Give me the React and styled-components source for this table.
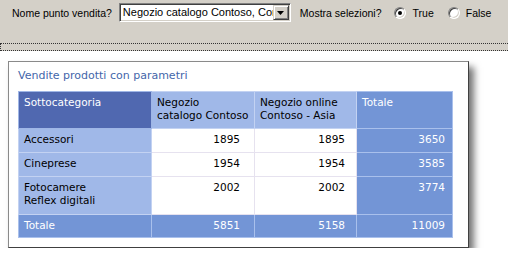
import React from 'react'
import styled, { createGlobalStyle } from 'styled-components'

const Global = createGlobalStyle`
    body {
        margin: 0;
        background: #fff;
    }
`;

const rows = [
    { name: ['Accessori'], a: 1895, b: 1895, tot: 3650, h: 24 },
    { name: ['Cineprese'], a: 1954, b: 1954, tot: 3585, h: 24 },
    { name: ['Fotocamere', 'Reflex digitali'], a: 2002, b: 2002, tot: 3774, h: 38 },
];

export default function App () {
    return (
        <>
            <Global />
            <Toolbar>
                <Label>Nome punto vendita?</Label>
                <Select>
                    <SelectText>Negozio catalogo Contoso, Cor</SelectText>
                    <SelectButton>
                        <svg width="7" height="4" viewBox="0 0 7 4">
                            <path d="M0 0h7L3.5 4z" fill="#000" />
                        </svg>
                    </SelectButton>
                </Select>
                <Label $ml={9}>Mostra selezioni?</Label>
                <Radio $ml={12} $checked />
                <Label $ml={7}>True</Label>
                <Radio $ml={14} />
                <Label $ml={6}>False</Label>
            </Toolbar>
            <Splitter />

            <Page>
                <ReportBox>
                    <Title>Vendite prodotti con parametri</Title>
                    <Table>
                        <colgroup>
                            <col style={{ width: 133 }} />
                            <col style={{ width: 103 }} />
                            <col style={{ width: 102 }} />
                            <col style={{ width: 96 }} />
                        </colgroup>
                        <tbody>
                            <tr style={{ height: 37 }}>
                                <Cell $kind="corner">Sottocategoria</Cell>
                                <Cell $kind="head">Negozio<br />catalogo Contoso</Cell>
                                <Cell $kind="head">Negozio online<br />Contoso - Asia</Cell>
                                <Cell $kind="total">Totale</Cell>
                            </tr>
                            {rows.map((r) => (
                                <tr key={r.name[0]} style={{ height: r.h }}>
                                    <Cell $kind="label">
                                        {r.name.map((n, i) => (
                                            <React.Fragment key={n}>{i > 0 && <br />}{n}</React.Fragment>
                                        ))}
                                    </Cell>
                                    <Cell $kind="data" $num $pr={14}>{r.a}</Cell>
                                    <Cell $kind="data" $num $pr={11}>{r.b}</Cell>
                                    <Cell $kind="total" $num $pr={7}>{r.tot}</Cell>
                                </tr>
                            ))}
                            <tr style={{ height: 23 }}>
                                <Cell $kind="total">Totale</Cell>
                                <Cell $kind="total" $num $pr={14}>5851</Cell>
                                <Cell $kind="total" $num $pr={11}>5158</Cell>
                                <Cell $kind="total" $num $pr={7}>11009</Cell>
                            </tr>
                        </tbody>
                    </Table>
                </ReportBox>
            </Page>
        </>
    );
}


const Toolbar = styled.div `
    height: 43px;
    box-sizing: border-box;
    background: #d4d0c8;
    display: flex;
    align-items: center;
    padding: 3px 0 21px 12px;
    font-family: 'Liberation Sans', Arial, sans-serif;
    font-size: 10.5px;
    color: #000;
`;

const Label = styled.span `
    margin-left: ${(p) => p.$ml || 0}px;
    white-space: nowrap;
`;

const Select = styled.div `
    margin-left: 7px;
    width: 172px;
    height: 19px;
    box-sizing: border-box;
    display: flex;
    background: #fff;
    border: 1px solid;
    border-color: #808080 #fff #fff #808080;
    box-shadow: inset 1px 1px 0 #404040, inset -1px -1px 0 #d4d0c8;
    padding: 1px;
    overflow: hidden;
`;

const SelectText = styled.div `
    flex: 1;
    overflow: hidden;
    white-space: nowrap;
    padding-left: 2px;
    line-height: 15px;
    font-size: 11px;
`;

const SelectButton = styled.div `
    width: 16px;
    height: 15px;
    box-sizing: border-box;
    background: #d4d0c8;
    border: 1px solid;
    border-color: #d4d0c8 #404040 #404040 #d4d0c8;
    box-shadow: inset 1px 1px 0 #fff, inset -1px -1px 0 #808080;
    display: flex;
    align-items: center;
    justify-content: center;
`;

const Radio = styled.span `
    margin-left: ${(p) => p.$ml || 0}px;
    width: 12px;
    height: 12px;
    box-sizing: border-box;
    border-radius: 50%;
    background: #fff;
    border: 1px solid;
    border-color: #808080 #fff #fff #808080;
    box-shadow: inset 1px 1px 0 #404040, inset -1px -1px 0 #d4d0c8;
    display: flex;
    align-items: center;
    justify-content: center;

    &::after {
        content: '';
        width: 4px;
        height: 4px;
        border-radius: 50%;
        background: ${(p) => (p.$checked ? '#000' : 'transparent')};
    }
`;

const Splitter = styled.div `
    height: 8px;
    box-sizing: border-box;
    background: #d4d0c8;
    border-top: 1px dotted #333;
    border-bottom: 1px dotted #333;
    border-left: 1px dotted #333;
`;

const Page = styled.div `
    padding: 10px 0 0 8px;
`;

const ReportBox = styled.div `
    width: 461px;
    height: 187px;
    box-sizing: border-box;
    background: #fff;
    border: 1px solid #6a6a6a;
    border-color: #8a8a8a #404040 #404040 #8a8a8a;
    box-shadow: 5px 6px 7px rgba(0, 0, 0, 0.55);
    padding: 7px 0 0 9px;
    font-family: 'DejaVu Sans', Verdana, sans-serif;
`;

const Title = styled.div `
    color: #4466aa;
    font-size: 11px;
    line-height: 14px;
    height: 22px;
`;

const Table = styled.table `
    border-collapse: collapse;
    table-layout: fixed;
    width: 434px;
    font-size: 10.5px;
    line-height: 13px;
`;

const kinds = {
    corner: { bg: '#5068b0', fg: '#fff', line: '#9fb6e6' },
    head: { bg: '#a0b8e8', fg: '#000', line: '#c3d2f2' },
    total: { bg: '#7395d6', fg: '#fff', line: '#a9c0ec' },
    label: { bg: '#a0b8e8', fg: '#000', line: '#c3d2f2' },
    data: { bg: '#fff', fg: '#000', line: '#e6e2ef' },
};

const Cell = styled.td `
    background: ${(p) => kinds[p.$kind].bg};
    color: ${(p) => kinds[p.$kind].fg};
    border: 1px solid ${(p) => kinds[p.$kind].line};
    vertical-align: top;
    text-align: ${(p) => (p.$num ? 'right' : 'left')};
    padding: 4px ${(p) => (p.$pr != null ? p.$pr : 5)}px 0 5px;
    white-space: nowrap;
    overflow: hidden;
`;
